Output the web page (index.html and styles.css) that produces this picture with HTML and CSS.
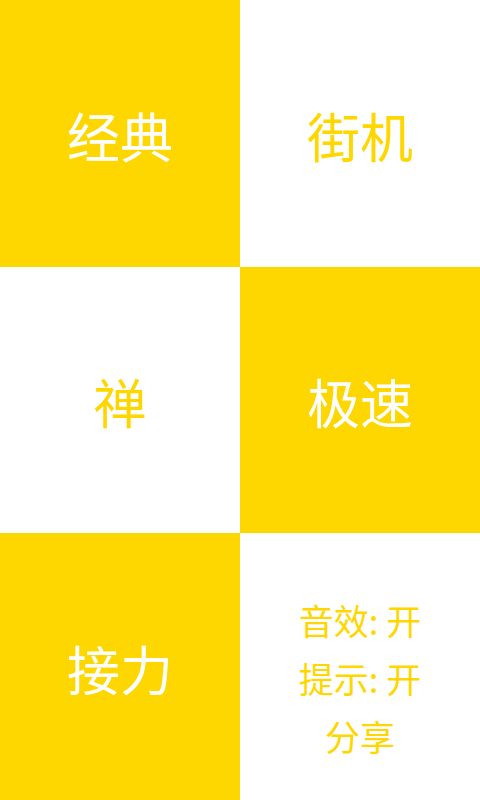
FILE: index.html
```html
<!DOCTYPE html>
<html lang="zh-CN">
<head>
<meta charset="utf-8">
<link rel="stylesheet" href="styles.css">
</head>
<body>
<div class="grid">
  <div class="cell yellow"><span class="big">经典</span></div>
  <div class="cell white"><span class="big">街机</span></div>
  <div class="cell white"><span class="big">禅</span></div>
  <div class="cell yellow"><span class="big">极速</span></div>
  <div class="cell yellow"><span class="big">接力</span></div>
  <div class="cell white menu">
    <span class="small">音效: 开</span>
    <span class="small">提示: 开</span>
    <span class="small">分享</span>
  </div>
</div>
</body>
</html>
```
FILE: styles.css
```css
html, body {
  margin: 0;
  padding: 0;
  width: 480px;
  height: 800px;
  overflow: hidden;
  background: #ffffff;
  font-family: "Noto Sans CJK SC", "Noto Sans", sans-serif;
}
.grid {
  display: grid;
  grid-template-columns: 240px 240px;
  grid-template-rows: repeat(3, 1fr);
  width: 480px;
  height: 800px;
}
.cell {
  display: flex;
  align-items: center;
  justify-content: center;
}
.yellow {
  background: #ffd700;
  color: #ffffff;
}
.white {
  background: #ffffff;
  color: #ffd700;
}
.big {
  font-size: 53px;
  line-height: 1;
  padding-top: 4px;
}
.menu {
  flex-direction: column;
  padding-top: 22px;
}
.small {
  font-size: 35px;
  line-height: 58px;
}
```
